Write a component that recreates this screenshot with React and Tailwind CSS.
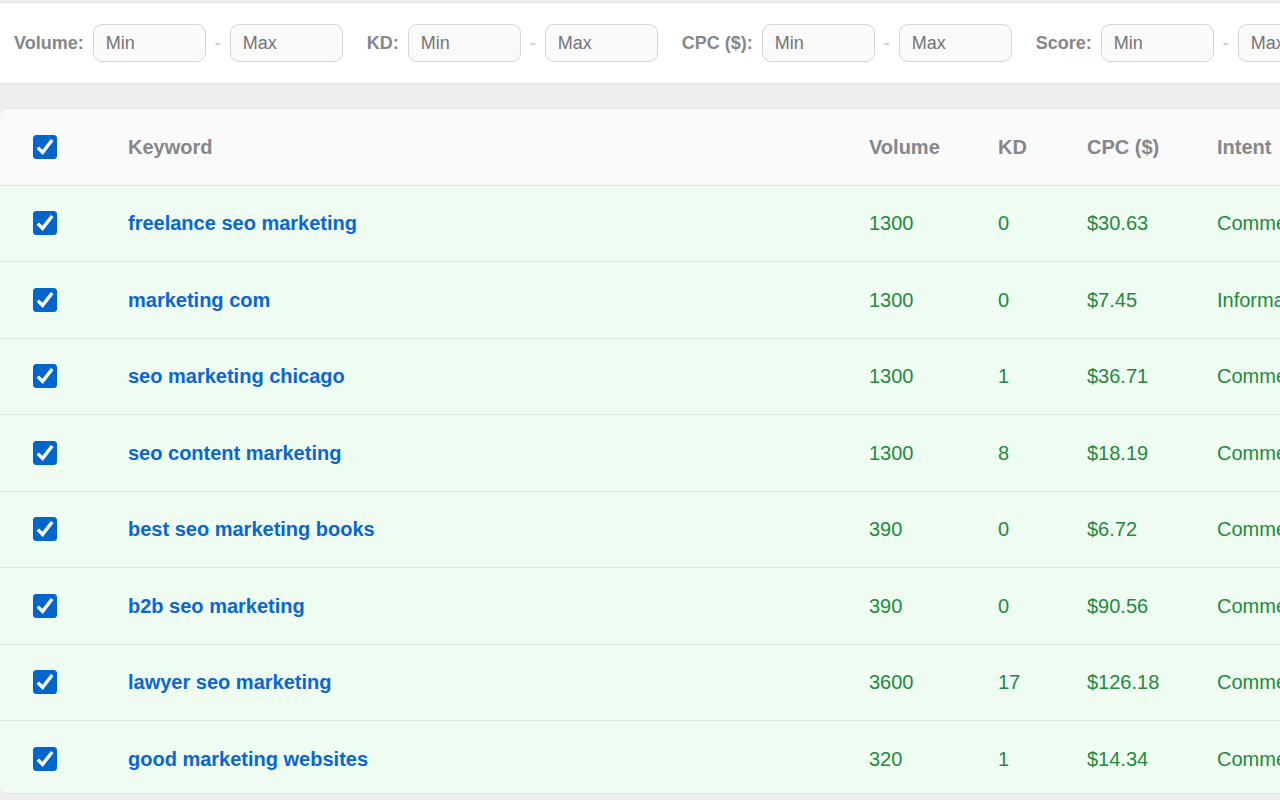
import React, { useState } from 'react'
import { clsx } from 'clsx'

const FILTERS = [
  { id: 'volume', label: 'Volume:' },
  { id: 'kd', label: 'KD:' },
  { id: 'cpc', label: 'CPC ($):' },
  { id: 'score', label: 'Score:' },
]

const KEYWORDS = [
  { keyword: 'freelance seo marketing', volume: 1300, kd: 0, cpc: '$30.63', intent: 'Commercial' },
  { keyword: 'marketing com', volume: 1300, kd: 0, cpc: '$7.45', intent: 'Informational' },
  { keyword: 'seo marketing chicago', volume: 1300, kd: 1, cpc: '$36.71', intent: 'Commercial' },
  { keyword: 'seo content marketing', volume: 1300, kd: 8, cpc: '$18.19', intent: 'Commercial' },
  { keyword: 'best seo marketing books', volume: 390, kd: 0, cpc: '$6.72', intent: 'Commercial' },
  { keyword: 'b2b seo marketing', volume: 390, kd: 0, cpc: '$90.56', intent: 'Commercial' },
  { keyword: 'lawyer seo marketing', volume: 3600, kd: 17, cpc: '$126.18', intent: 'Commercial' },
  { keyword: 'good marketing websites', volume: 320, kd: 1, cpc: '$14.34', intent: 'Commercial' },
]

const RangeInput = ({ id, placeholder, label }) => (
  <input
    id={id}
    type="text"
    inputMode="numeric"
    placeholder={placeholder}
    aria-label={label}
    className="w-[113px] h-[38px] shrink-0 rounded-[9px] border border-[#d6d6d9] bg-[#fafafa] px-3 text-[#1d1d1f] placeholder:text-[#757575]"
  />
)

const RangeFilter = ({ id, label }) => (
  <div className="flex shrink-0 items-center gap-[9px]">
    <label htmlFor={`${id}-min`} className="font-bold text-[#86868b]">{label}</label>
    <RangeInput id={`${id}-min`} placeholder="Min" />
    <span className="font-bold text-[#d2d2d7]">-</span>
    <RangeInput id={`${id}-max`} placeholder="Max" label={`${label} maximum`} />
  </div>
)

const Checkbox = ({ label, checked, onChange }) => (
  <span className="ml-[5px] grid size-6">
    <input
      type="checkbox"
      aria-label={label}
      checked={checked}
      onChange={onChange}
      className="col-start-1 row-start-1 size-6 appearance-none rounded-[3px] border border-[#86868b] bg-white checked:border-[#0066cc] checked:bg-[#0066cc]"
    />
    {checked && (
      <svg viewBox="0 0 24 24" fill="none" className="pointer-events-none col-start-1 row-start-1 size-6">
        <path d="M4.8 12.6 L9.6 17.4 L19.2 5" stroke="white" strokeWidth="3.4" />
      </svg>
    )}
  </span>
)

const HeaderCell = ({ children }) => (
  <th scope="col" className="px-7 text-left font-bold">{children}</th>
)

const App = () => {
  const [selected, setSelected] = useState(KEYWORDS.map((row) => row.keyword))
  const allSelected = selected.length === KEYWORDS.length

  const toggle = (keyword) => {
    setSelected((prev) =>
      prev.includes(keyword) ? prev.filter((k) => k !== keyword) : [...prev, keyword]
    )
  }

  const toggleAll = () => setSelected(allSelected ? [] : KEYWORDS.map((row) => row.keyword))

  return (
    <div className="flex h-screen flex-col gap-6 overflow-hidden bg-[#eeeef0] pt-0.5 pb-1.5 font-['Liberation_Sans',Arial,sans-serif]">
      <section className="flex shrink-0 items-center gap-6 overflow-hidden border-y border-[#e6e6e8] bg-white px-3.5 py-[21px] text-[18px]">
        {FILTERS.map((filter) => (
          <RangeFilter key={filter.id} id={filter.id} label={filter.label} />
        ))}
      </section>

      <section className="min-h-0 flex-1 overflow-hidden rounded-l-lg border-y border-[#e6e6e8] bg-[#fafafa]">
        <table className="w-full min-w-[1500px] table-fixed border-collapse text-[20px]">
          <colgroup>
            <col className="w-[100px]" />
            <col />
            <col className="w-[129px]" />
            <col className="w-[89px]" />
            <col className="w-[130px]" />
            <col className="w-[311px]" />
          </colgroup>
          <thead>
            <tr className="h-[76px] border-b border-[#d5e5dc] text-[#86868b]">
              <th scope="col" className="px-7">
                <Checkbox label="Select all keywords" checked={allSelected} onChange={toggleAll} />
              </th>
              <HeaderCell>Keyword</HeaderCell>
              <HeaderCell>Volume</HeaderCell>
              <HeaderCell>KD</HeaderCell>
              <HeaderCell>CPC ($)</HeaderCell>
              <HeaderCell>Intent</HeaderCell>
            </tr>
          </thead>
          <tbody>
            {KEYWORDS.map((row) => {
              const isSelected = selected.includes(row.keyword)
              return (
                <tr
                  key={row.keyword}
                  className={clsx(
                    'h-[76px] border-b border-[#d8e6de] even:h-[77px]',
                    isSelected ? 'bg-[#eefcf2] text-[#248a3d]' : 'bg-white text-[#1d1d1f]'
                  )}
                >
                  <td className="px-7">
                    <Checkbox
                      label={`Select ${row.keyword}`}
                      checked={isSelected}
                      onChange={() => toggle(row.keyword)}
                    />
                  </td>
                  <td className="px-7 font-bold text-[#0a66d0]">{row.keyword}</td>
                  <td className="px-7">{row.volume}</td>
                  <td className="px-7">{row.kd}</td>
                  <td className="px-7">{row.cpc}</td>
                  <td className="px-7">{row.intent}</td>
                </tr>
              )
            })}
          </tbody>
        </table>
      </section>
    </div>
  )
}

export default App
